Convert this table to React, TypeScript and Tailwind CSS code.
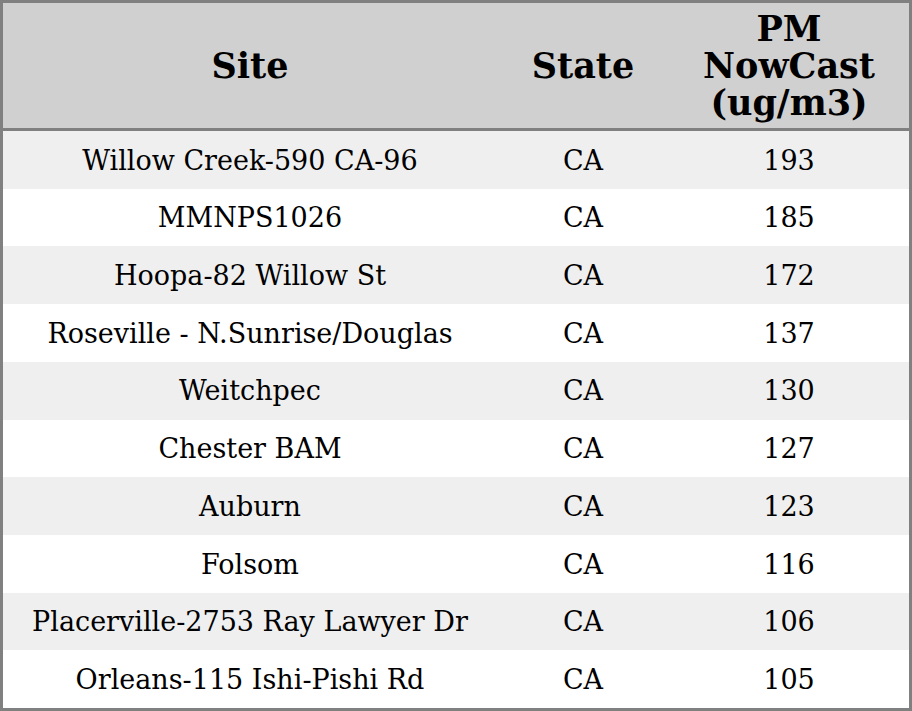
import React from "react"

const rows: [string, string, number][] = [
  ["Willow Creek-590 CA-96", "CA", 193],
  ["MMNPS1026", "CA", 185],
  ["Hoopa-82 Willow St", "CA", 172],
  ["Roseville - N.Sunrise/Douglas", "CA", 137],
  ["Weitchpec", "CA", 130],
  ["Chester BAM", "CA", 127],
  ["Auburn", "CA", 123],
  ["Folsom", "CA", 116],
  ["Placerville-2753 Ray Lawyer Dr", "CA", 106],
  ["Orleans-115 Ishi-Pishi Rd", "CA", 105],
]

export default function App() {
  return (
    <div
      className="w-[912px] h-[711px] border-[3px] border-[#808080] flex flex-col bg-white text-black"
      style={{ fontFamily: '"DejaVu Serif", serif' }}
    >
      <div className="h-[128px] shrink-0 flex bg-[#d0d0d0] border-b-[3px] border-[#808080] font-bold text-[35px] leading-[37px]">
        <div className="w-[494px] flex items-center justify-center">Site</div>
        <div className="w-[172px] flex items-center justify-center">State</div>
        <div className="flex-1 flex items-center justify-center text-center">
          PM
          <br />
          NowCast
          <br />
          (ug/m3)
        </div>
      </div>
      {rows.map(([site, state, val], i) => (
        <div
          key={site}
          className={
            "flex-1 flex items-center pt-[2px] text-[27px] " +
            (i % 2 === 0 ? "bg-[#efefef]" : "bg-white")
          }
        >
          <div className="w-[494px] text-center">{site}</div>
          <div className="w-[172px] text-center">{state}</div>
          <div className="flex-1 text-center">{val}</div>
        </div>
      ))}
    </div>
  )
}
